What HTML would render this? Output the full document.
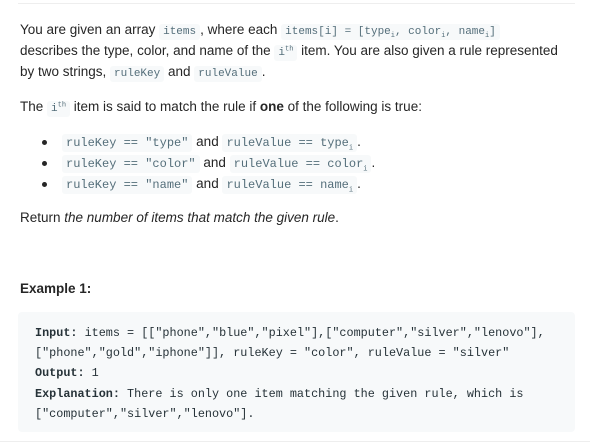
<!DOCTYPE html>
<html><head><meta charset="utf-8"><style>
body{margin:0;background:#fff;width:590px;height:444px;overflow:hidden;font-family:"Liberation Sans",sans-serif;color:#262626;font-size:13.5px;}
.rule{position:absolute;left:18px;top:3px;width:557px;height:1px;background:#eee;}
.l{position:absolute;left:20px;white-space:nowrap;line-height:21px;}
code{font-family:"Liberation Mono",monospace;font-size:11px;background:#f7f9fa;color:#546e7a;padding:2px 4px;border-radius:3px;}
.b code{font-size:12px;}
sub,sup{font-size:7px;line-height:0;}
.dot{position:absolute;left:42px;width:5px;height:5px;border-radius:50%;background:#262626;}
pre{position:absolute;left:18px;top:312px;width:557px;height:120px;margin:0;background:#f7f9fa;border-radius:4px;box-sizing:border-box;padding:11px 17px;font-family:"Liberation Mono",monospace;font-size:11.8px;line-height:20.2px;color:#263238;}
.bot{position:absolute;left:0;top:441px;width:590px;height:1px;background:#eee;}
</style></head><body>
<div class="rule"></div>
<div class="l" style="top:19px">You are given an array <code>items</code>, where each <code>items[i] = [type<sub>i</sub>, color<sub>i</sub>, name<sub>i</sub>]</code></div>
<div class="l" style="top:40px">describes the type, color, and name of the <code>i<sup>th</sup></code> item. You are also given a rule represented</div>
<div class="l" style="top:61px">by two strings, <code>ruleKey</code> and <code>ruleValue</code>.</div>
<div class="l" style="top:96px">The <code>i<sup>th</sup></code> item is said to match the rule if <b>one</b> of the following is true:</div>
<div class="dot" style="top:140px"></div>
<div class="l b" style="top:131px;left:62px"><code>ruleKey == "type"</code> and <code>ruleValue == type<sub>i</sub></code>.</div>
<div class="dot" style="top:161px"></div>
<div class="l b" style="top:152px;left:62px"><code>ruleKey == "color"</code> and <code>ruleValue == color<sub>i</sub></code>.</div>
<div class="dot" style="top:182px"></div>
<div class="l b" style="top:173px;left:62px"><code>ruleKey == "name"</code> and <code>ruleValue == name<sub>i</sub></code>.</div>
<div class="l" style="top:207px">Return <i>the number of items that match the given rule</i>.</div>
<div class="l" style="top:278px"><b>Example 1:</b></div>
<pre><b>Input:</b> items = [["phone","blue","pixel"],["computer","silver","lenovo"],
["phone","gold","iphone"]], ruleKey = "color", ruleValue = "silver"
<b>Output:</b> 1
<b>Explanation:</b> There is only one item matching the given rule, which is
["computer","silver","lenovo"].</pre>
<div class="bot"></div>
</body></html>
